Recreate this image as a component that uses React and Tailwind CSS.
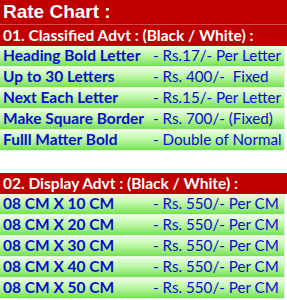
const classified = [
  ["Heading Bold Letter", "- Rs.17/- Per Letter"],
  ["Up to 30 Letters", "- Rs. 400/-  Fixed"],
  ["Next Each Letter", "- Rs.15/- Per Letter"],
  ["Make Square Border", "- Rs. 700/- (Fixed)"],
  ["Fulll Matter Bold", "- Double of Normal"],
];

const display = [10, 20, 30, 40, 50].map((h) => [
  `08 CM X ${h} CM`,
  "- Rs. 550/- Per CM",
]);

const RedHead = ({ children }) => (
  <div className="h-[21px] bg-[#c00000] flex items-center pl-[3px] text-white font-bold text-[15.5px] leading-none whitespace-pre">
    {children}
  </div>
);

const RateRow = ({ label, price }) => (
  <div className="h-[21px] w-[285px] flex items-center bg-gradient-to-b from-[#eefee8] via-[#b8f6a0] to-[#74e150] border-b border-r border-[#e6f3e0] text-[#0c0ccf] text-[15.5px] leading-none whitespace-pre">
    <div className="w-[153px] pl-[3px] font-bold">{label}</div>
    <div className="text-[15.2px]">{price}</div>
  </div>
);

export default function App() {
  return (
    <div className="w-[287px] h-[300px] bg-white overflow-hidden font-['Lato','Open_Sans',sans-serif]">
      <div className="h-[25px] bg-[#c00000] border-b border-[#d84848] flex items-center pl-[3px] text-white font-bold text-[19px] font-['Liberation_Sans',sans-serif]">
        Rate Chart :
      </div>
      <RedHead>01. Classified Advt : (Black / White) :</RedHead>
      {classified.map(([l, p]) => (
        <RateRow key={l} label={l} price={p} />
      ))}
      <div className="h-[22px]" />
      <RedHead>02. Display Advt : (Black / White) :</RedHead>
      {display.map(([l, p]) => (
        <RateRow key={l} label={l} price={p} />
      ))}
    </div>
  );
}
